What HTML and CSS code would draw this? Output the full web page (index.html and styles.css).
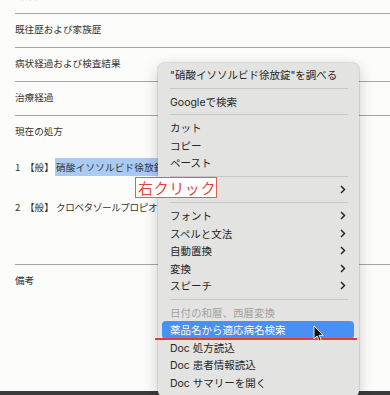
FILE: index.html
```html
<!DOCTYPE html>
<html lang="ja">
<head>
<meta charset="utf-8">
<link rel="stylesheet" href="styles.css">
</head>
<body>
<div class="page">
  <div class="doc">
    <section class="sec"><span>臨床経過</span></section>
    <section class="sec"><span>既往歴および家族歴</span></section>
    <section class="sec"><span>病状経過および検査結果</span></section>
    <section class="sec"><span>治療経過</span></section>
    <section class="sec short"><span>現在の処方</span></section>
    <div class="rx">
      <div class="rx-item"><span class="num">1</span><span class="kind">【般】</span><span class="sel">硝酸イソソルビド徐放錠20mg</span></div>
      <div class="rx-item"><span class="num">2</span><span class="kind">【般】</span><span class="name">クロベタゾールプロピオン酸エステル軟膏</span></div>
    </div>
    <section class="sec"><span>備考</span></section>
  </div>
  <div class="bottom-bar"></div>

  <div class="menu">
    <div class="item">"硝酸イソソルビド徐放錠"を調べる</div>
    <div class="sep"></div>
    <div class="item">Googleで検索</div>
    <div class="sep"></div>
    <div class="item">カット</div>
    <div class="item">コピー</div>
    <div class="item">ペースト</div>
    <div class="sep"></div>
    <div class="item"><span></span><svg class="chev" viewBox="0 0 6 9"><polyline points="1,1 4.5,4.5 1,8"/></svg></div>
    <div class="sep"></div>
    <div class="item"><span>フォント</span><svg class="chev" viewBox="0 0 6 9"><polyline points="1,1 4.5,4.5 1,8"/></svg></div>
    <div class="item"><span>スペルと文法</span><svg class="chev" viewBox="0 0 6 9"><polyline points="1,1 4.5,4.5 1,8"/></svg></div>
    <div class="item"><span>自動置換</span><svg class="chev" viewBox="0 0 6 9"><polyline points="1,1 4.5,4.5 1,8"/></svg></div>
    <div class="item"><span>変換</span><svg class="chev" viewBox="0 0 6 9"><polyline points="1,1 4.5,4.5 1,8"/></svg></div>
    <div class="item"><span>スピーチ</span><svg class="chev" viewBox="0 0 6 9"><polyline points="1,1 4.5,4.5 1,8"/></svg></div>
    <div class="sep"></div>
    <div class="item disabled">日付の和暦、西暦変換</div>
    <div class="item active">薬品名から適応病名検索</div>
    <div class="item">Doc 処方読込</div>
    <div class="item">Doc 患者情報読込</div>
    <div class="item">Doc サマリーを開く</div>
  </div>

  <div class="label">右クリック</div>
  <div class="redline"></div>
  <svg class="cursor" viewBox="0 0 12 19">
    <path d="M1 1 L1 15.5 L4.4 12.3 L6.8 17.8 L9 16.8 L6.7 11.5 L11.2 11.5 Z" />
  </svg>
</div>
</body>
</html>
```

FILE: styles.css
```css
html, body {
  margin: 0;
  padding: 0;
  background: #fcfcfa;
}

.page {
  position: relative;
  width: 390px;
  height: 395px;
  overflow: hidden;
  display: flex;
  flex-direction: column;
  background: #fcfcfa;
}

.doc {
  flex: 1;
  overflow: hidden;
  padding-left: 15px;
  margin-top: -21px;
  font-family: "Noto Sans CJK JP", sans-serif;
  font-size: 9.6px;
  color: #333333;
}

.sec {
  border-top: 1px solid #a6a6a6;
  height: 33px;
}

.sec.short {
  height: 21px;
}

.sec span {
  display: block;
  line-height: 12px;
  padding-top: 9px;
}

.rx {
  padding-top: 10px;
  height: 117px;
}

.rx-item {
  display: flex;
  align-items: center;
  height: 40px;
  white-space: nowrap;
}

.num {
  width: 10px;
}

.kind {
  width: 30px;
}

.sel {
  background: #a9cbf3;
  line-height: 18px;
  padding-left: 1px;
  letter-spacing: 0.2px;
}

.name {
  padding-left: 1px;
  letter-spacing: -0.4px;
}

.bottom-bar {
  height: 4px;
  background: #3b3b3b;
  flex: none;
}

.menu {
  position: absolute;
  left: 158px;
  top: 63px;
  width: 201px;
  padding: 3px 0 6px;
  background: #e3e3e1;
  border-radius: 6px;
  box-shadow: 0 0 0 0.5px rgba(0, 0, 0, 0.18), 0 4px 16px rgba(0, 0, 0, 0.2);
  font-family: "Inter", "Noto Sans CJK JP", sans-serif;
  font-size: 10.5px;
  color: #262626;
}

.item {
  height: 17.5px;
  display: flex;
  align-items: center;
  justify-content: space-between;
  margin: 0 5px 0 4px;
  padding: 0 8px;
  border-radius: 4px;
  white-space: nowrap;
}

.item.disabled {
  color: #a2a2a0;
}

.item.active {
  background: #4a8ff3;
  color: #ffffff;
}

.sep {
  height: 1px;
  background: #c8c8c6;
  margin: 4px 11px 4px 12px;
}

.chev {
  width: 6px;
  height: 9px;
}

.chev polyline {
  fill: none;
  stroke: #2a2a2a;
  stroke-width: 1.5;
}

.label {
  position: absolute;
  left: 135px;
  top: 177px;
  width: 77px;
  height: 19px;
  padding: 0 1px 0 2px;
  background: #ffffff;
  border: 1.5px solid #ea5a4e;
  font-family: "Noto Sans CJK JP", sans-serif;
  font-size: 15px;
  line-height: 19px;
  letter-spacing: 0.6px;
  color: #e8433a;
  white-space: nowrap;
}

.redline {
  position: absolute;
  left: 155px;
  top: 338px;
  width: 202px;
  height: 2px;
  background: #e8392c;
}

.cursor {
  position: absolute;
  left: 313px;
  top: 325px;
  width: 11px;
  height: 17px;
}

.cursor path {
  fill: #111111;
  stroke: #ffffff;
  stroke-width: 1;
}
```
